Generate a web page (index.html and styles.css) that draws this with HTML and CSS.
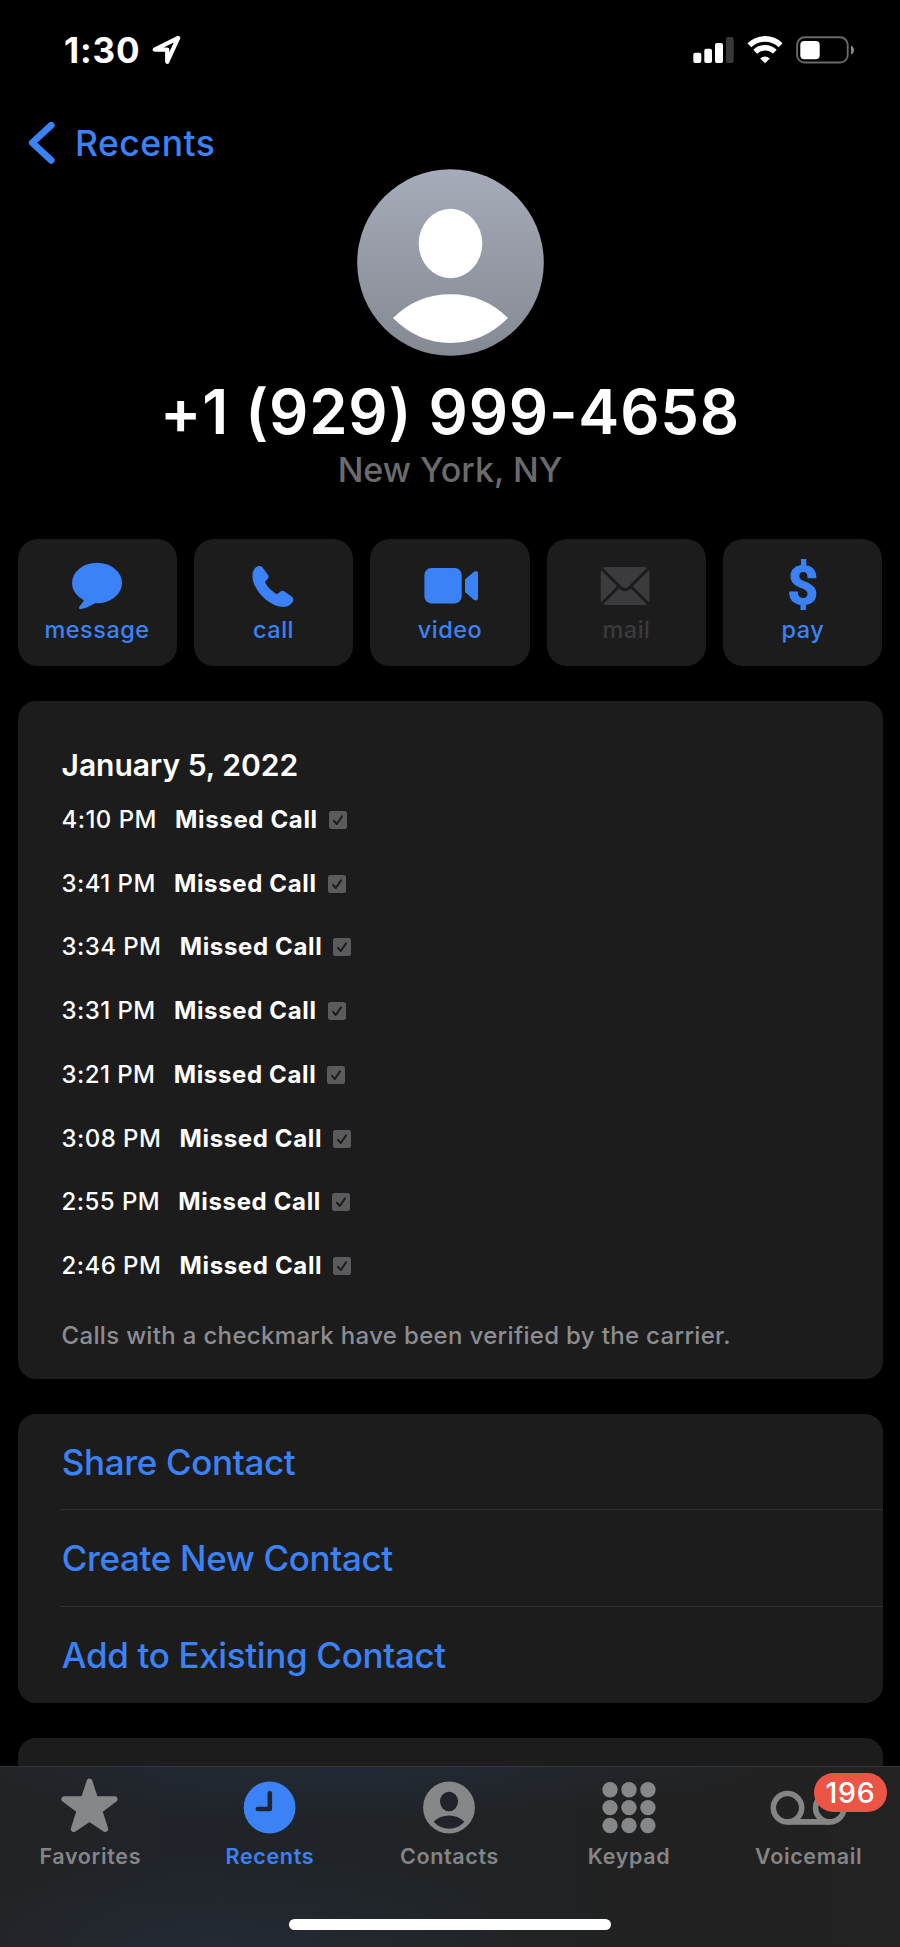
FILE: index.html
```html
<!DOCTYPE html>
<html lang="en">
<head>
<meta charset="utf-8">
<title>Contact</title>
<link rel="stylesheet" href="styles.css">
</head>
<body>
<div class="screen">
  <header class="status">
    <span class="clock">1:30</span>
    <svg class="location" width="32" height="32" viewBox="0 0 32 32"><path d="M27.2 3.8 L3.7 15.6 H16.2 V27.8 Z" fill="none" stroke="#fff" stroke-width="4.2" stroke-linejoin="round"/></svg>
    <svg class="signals" width="166" height="32" viewBox="0 0 166 32">
      <g fill="#fff"><rect x="3.3" y="18.7" width="8" height="10.3" rx="2"/><rect x="14.3" y="14.7" width="7.7" height="14.3" rx="2"/><rect x="25" y="9" width="8" height="20" rx="2"/></g>
      <rect x="36" y="3" width="7.7" height="26" rx="2" fill="#38383a"/>
      <g fill="none" stroke="#fff">
        <path d="M59.4 11.2 A22.5 22.5 0 0 1 90.6 11.2" stroke-width="5.6"/>
        <path d="M65.2 17.8 A14 14 0 0 1 84.8 17.8" stroke-width="5.4"/>
      </g>
      <path d="M75 29.3 L70.2 24.6 Q75 20.2 79.8 24.6 Z" fill="#fff"/>
      <rect x="107.1" y="3.3" width="50.6" height="25.2" rx="7.5" fill="none" stroke="#69696b" stroke-width="1.9"/>
      <rect x="110.3" y="7" width="19.4" height="18.2" rx="4" fill="#fff"/>
      <path d="M161 11.5 Q164 13 164 16 Q164 19 161 20.5 Z" fill="#8b8b8d"/>
    </svg>
  </header>

  <nav class="nav">
    <svg width="28" height="46" viewBox="0 0 28 46"><path d="M23.2 5.3 L4.3 22.8 L23.2 40.3" fill="none" stroke="#3b82f7" stroke-width="6.8" stroke-linecap="round" stroke-linejoin="round"/></svg>
    <span class="back">Recents</span>
  </nav>

  <section class="profile">
    <svg class="avatar" width="187" height="187" viewBox="0 0 187 187">
      <defs><linearGradient id="sky" x1="0" y1="0" x2="0" y2="1"><stop offset="0" stop-color="#a6abb9"/><stop offset="1" stop-color="#858992"/></linearGradient></defs>
      <circle cx="93.5" cy="93.5" r="93.3" fill="url(#sky)"/>
      <ellipse cx="93.5" cy="74.5" rx="31.8" ry="34.7" fill="#fff"/>
      <path d="M36 149 Q60 125.2 93.5 125.2 Q127 125.2 151 149 Q126 174 93.5 174 Q61 174 36 149 Z" fill="#fff"/>
    </svg>
    <h1 class="number">+1 (929) 999-4658</h1>
    <p class="place">New York, NY</p>
  </section>

  <section class="actions">
    <div class="action">
      <svg width="60" height="56" viewBox="0 0 60 56"><ellipse cx="30" cy="26" rx="25" ry="20.3"/><path d="M12 36 L17 40 C18 43 15 46.5 12.6 49.2 C11.2 51 12 52.3 14.2 52 C20 51 25 48 29 45.5 Z"/></svg>
      <span class="label">message</span>
    </div>
    <div class="action">
      <svg width="60" height="56" viewBox="0 0 60 56"><path d="M12 10.3 C14 8.6 17.2 8.6 18.8 10.8 L24 18 C25.2 20 24.4 21.2 22.6 23 C21 24.6 20.9 25.4 21.8 26.8 C24 30.4 27.6 34 31.4 36.4 C32.8 37.2 33.6 37.1 35 35.8 C37 33.9 38.4 33.2 40.4 34.4 L47.4 39.2 C49.8 40.9 49.8 43.8 48.1 45.8 C45.2 49.2 42 50.3 37.6 49.8 C24 48.2 9.2 33 8.5 20 C8.3 16 9 12.9 12 10.3 Z"/></svg>
      <span class="label">call</span>
    </div>
    <div class="action">
      <svg width="60" height="56" viewBox="0 0 60 56"><rect x="4.4" y="11" width="37.3" height="35.4" rx="7"/><path d="M45 22.5 L53.5 15 Q58 12.2 58 17 V40.4 Q58 45.2 53.5 42.4 L45 34.9 Z"/></svg>
      <span class="label">video</span>
    </div>
    <div class="action disabled">
      <svg width="60" height="56" viewBox="0 0 60 56"><rect x="4.7" y="10" width="48.7" height="38" rx="5"/><path class="fold" d="M5 11 L24.6 30.6 Q29 34.8 33.4 30.6 L53 11 M5.5 47 L22.5 30 M52.5 47 L35.5 30"/></svg>
      <span class="label">mail</span>
    </div>
    <div class="action">
      <svg width="60" height="56" viewBox="0 0 60 56"><text class="dollar" x="29.7" y="47.2" text-anchor="middle">$</text></svg>
      <span class="label">pay</span>
    </div>
  </section>

  <section class="card history">
    <h2 class="date">January 5, 2022</h2>
    <ul class="calls">
      <li><span>4:10 PM</span><b>Missed Call</b><svg class="check" viewBox="0 0 18 18"><rect width="18" height="18" rx="2.5"/><path d="M5 9.8 L7.8 13 L13 5.4"/></svg></li>
      <li><span>3:41 PM</span><b>Missed Call</b><svg class="check" viewBox="0 0 18 18"><rect width="18" height="18" rx="2.5"/><path d="M5 9.8 L7.8 13 L13 5.4"/></svg></li>
      <li><span>3:34 PM</span><b>Missed Call</b><svg class="check" viewBox="0 0 18 18"><rect width="18" height="18" rx="2.5"/><path d="M5 9.8 L7.8 13 L13 5.4"/></svg></li>
      <li><span>3:31 PM</span><b>Missed Call</b><svg class="check" viewBox="0 0 18 18"><rect width="18" height="18" rx="2.5"/><path d="M5 9.8 L7.8 13 L13 5.4"/></svg></li>
      <li><span>3:21 PM</span><b>Missed Call</b><svg class="check" viewBox="0 0 18 18"><rect width="18" height="18" rx="2.5"/><path d="M5 9.8 L7.8 13 L13 5.4"/></svg></li>
      <li><span>3:08 PM</span><b>Missed Call</b><svg class="check" viewBox="0 0 18 18"><rect width="18" height="18" rx="2.5"/><path d="M5 9.8 L7.8 13 L13 5.4"/></svg></li>
      <li><span>2:55 PM</span><b>Missed Call</b><svg class="check" viewBox="0 0 18 18"><rect width="18" height="18" rx="2.5"/><path d="M5 9.8 L7.8 13 L13 5.4"/></svg></li>
      <li><span>2:46 PM</span><b>Missed Call</b><svg class="check" viewBox="0 0 18 18"><rect width="18" height="18" rx="2.5"/><path d="M5 9.8 L7.8 13 L13 5.4"/></svg></li>
    </ul>
    <p class="note">Calls with a checkmark have been verified by the carrier.</p>
  </section>

  <section class="card links">
    <a class="link">Share Contact</a>
    <a class="link">Create New Contact</a>
    <a class="link">Add to Existing Contact</a>
  </section>

  <section class="card next"></section>

  <footer class="tabbar">
    <div class="tabs">
      <div class="tab">
        <svg width="80" height="64" viewBox="0 0 80 64"><path d="M39.5 11.6 L45.2 29.2 H64.6 L49.3 40.6 L55.2 59 L39.5 48.4 L23.8 59 L29.7 40.6 L14.4 29.2 H33.8 Z" stroke="#858789" stroke-width="6" stroke-linejoin="round"/></svg>
        <span>Favorites</span>
      </div>
      <div class="tab active">
        <svg width="80" height="64" viewBox="0 0 80 64"><circle cx="40.6" cy="37.5" r="25.9"/><path d="M40.8 23.2 V39 H28.8" fill="none" stroke="#20262e" stroke-width="4.6" stroke-linecap="round" stroke-linejoin="round"/></svg>
        <span>Recents</span>
      </div>
      <div class="tab">
        <svg width="80" height="64" viewBox="0 0 80 64"><circle cx="40" cy="37.5" r="25.9"/><g fill="#20242a"><ellipse cx="40" cy="31.5" rx="9" ry="9.8"/><path d="M24.6 51.8 Q31 45.6 40 45.6 Q49 45.6 55.4 51.8 Q49 58.8 40 58.8 Q31 58.8 24.6 51.8 Z"/></g></svg>
        <span>Contacts</span>
      </div>
      <div class="tab">
        <svg width="80" height="64" viewBox="0 0 80 64"><circle cx="21" cy="19.8" r="7.7"/><circle cx="40" cy="19.8" r="7.7"/><circle cx="58.9" cy="19.8" r="7.7"/><circle cx="21" cy="37.6" r="7.7"/><circle cx="40" cy="37.6" r="7.7"/><circle cx="58.9" cy="37.6" r="7.7"/><circle cx="21" cy="55.5" r="7.7"/><circle cx="40" cy="55.5" r="7.7"/><circle cx="58.9" cy="55.5" r="7.7"/></svg>
        <span>Keypad</span>
      </div>
      <div class="tab">
        <svg width="80" height="64" viewBox="0 0 80 64"><g fill="none" stroke="#858585" stroke-width="5.6"><circle cx="19.5" cy="37.7" r="14.2"/><circle cx="61.8" cy="37.7" r="14.2"/><path d="M19.5 51.9 H61.8"/></g></svg>
        <span>Voicemail</span>
        <em class="badge">196</em>
      </div>
    </div>
    <div class="home"></div>
  </footer>
</div>
</body>
</html>
```
FILE: styles.css
```css
* { box-sizing: border-box; margin: 0; padding: 0; }
body { background: #000; }
svg { display: block; flex: none; overflow: visible; }

.screen {
  position: relative;
  width: 900px;
  height: 1947px;
  overflow: hidden;
  background: #000;
  color: #fff;
  font-family: Inter, "Liberation Sans", sans-serif;
  white-space: nowrap;
}

.status { display: flex; align-items: center; height: 99px; padding: 0 44px 0 64px; }
.clock { width: 87px; font-size: 35px; font-weight: 700; letter-spacing: 0.9px; }
.signals { margin-left: auto; }

.nav { display: flex; align-items: center; height: 70px; padding: 18px 0 0 28px; color: #3b82f7; }
.back { margin-left: 19px; font-size: 35.5px; font-weight: 550; letter-spacing: 0.5px; }

.profile { display: flex; flex-direction: column; align-items: center; }
.number { margin-top: 20.6px; font-size: 61.5px; line-height: 70px; font-weight: 600; letter-spacing: 0.8px; }
.place { margin-top: 3.9px; font-size: 34px; line-height: 40px; font-weight: 550; letter-spacing: 0; color: #6b6b6d; }

.actions { display: grid; grid-template-columns: repeat(5, 1fr); gap: 17.4px; margin: 49px 17.5px 0 17.5px; }
.action {
  display: flex;
  flex-direction: column;
  align-items: center;
  height: 126.5px;
  padding-top: 17.5px;
  border-radius: 20px;
  background: #1c1c1d;
  color: #3b82f7;
  fill: #3b82f7;
}
.label { margin-top: 3.5px; font-size: 23.5px; line-height: 28px; font-weight: 550; letter-spacing: 0.5px; }
.disabled { color: #3b3b3d; fill: #3b3b3d; }
.fold { fill: none; stroke: #1c1c1d; stroke-width: 3; }
.dollar { font-family: Roboto, sans-serif; font-size: 54px; font-weight: 700; stroke: #3b82f7; stroke-width: 1.2; }

.card { margin: 35px 17.5px 0 17.5px; border-radius: 18px; background: #1c1c1d; }
.history { height: 677.6px; padding: 44.3px 44px 0; }
.date { font-size: 30px; line-height: 40px; font-weight: 600; }
.calls { margin-top: 2.3px; list-style: none; }
.calls li { display: flex; align-items: center; height: 63.75px; font-size: 24px; font-weight: 450; letter-spacing: 0.45px; }
.calls b { margin-left: 18.2px; font-weight: 700; letter-spacing: 0.65px; }
.check { width: 18px; height: 18px; margin: 1px 0 0 11px; fill: #5b5b5d; }
.check path { fill: none; stroke: #1c1c1d; stroke-width: 2; stroke-linecap: round; stroke-linejoin: round; }
.note { margin-top: 18.9px; font-size: 24px; line-height: 40px; font-weight: 500; letter-spacing: 0.33px; color: #8d8d91; }

.links { margin-top: 35.4px; }
.link {
  display: block;
  height: 96.3px;
  margin-left: 43px;
  padding-left: 1.2px;
  border-bottom: 1.5px solid #303032;
  font-size: 35px;
  line-height: 96.3px;
  font-weight: 550;
  letter-spacing: -0.35px;
  color: #3b82f7;
}
.link:last-child { border-bottom: 0; }
.next { height: 120px; }

.tabbar {
  position: absolute;
  left: 0;
  bottom: 0;
  width: 900px;
  height: 181px;
  border-top: 1px solid #333537;
  background:
    radial-gradient(ellipse 420px 50px at 350px 0, #232a35, transparent),
    radial-gradient(ellipse 330px 90px at 220px 181px, #242a33, transparent),
    linear-gradient(90deg, #212223 0, #20242a 180px, #202427 420px, #212121 640px, #222 900px);
}
.tabs { display: grid; grid-template-columns: repeat(5, 1fr); padding: 3px 2px 0 0; }
.tab { position: relative; display: flex; flex-direction: column; align-items: center; color: #858587; fill: #858789; }
.tab span { margin-top: 8px; padding-left: 1px; font-size: 21.5px; line-height: 28px; font-weight: 600; letter-spacing: 0.65px; }
.tab.active { color: #3b82f7; fill: #3b82f7; }
.badge {
  position: absolute;
  top: 3px;
  right: 11px;
  width: 73px;
  height: 39px;
  border-radius: 20px;
  background: #ec5545;
  color: #fff;
  font-size: 28.5px;
  line-height: 39px;
  letter-spacing: 0.7px;
  font-style: normal;
  font-weight: 550;
  text-align: center;
}
.home { width: 322px; height: 11px; margin: 49px auto 0; border-radius: 6px; background: #fff; }
```
